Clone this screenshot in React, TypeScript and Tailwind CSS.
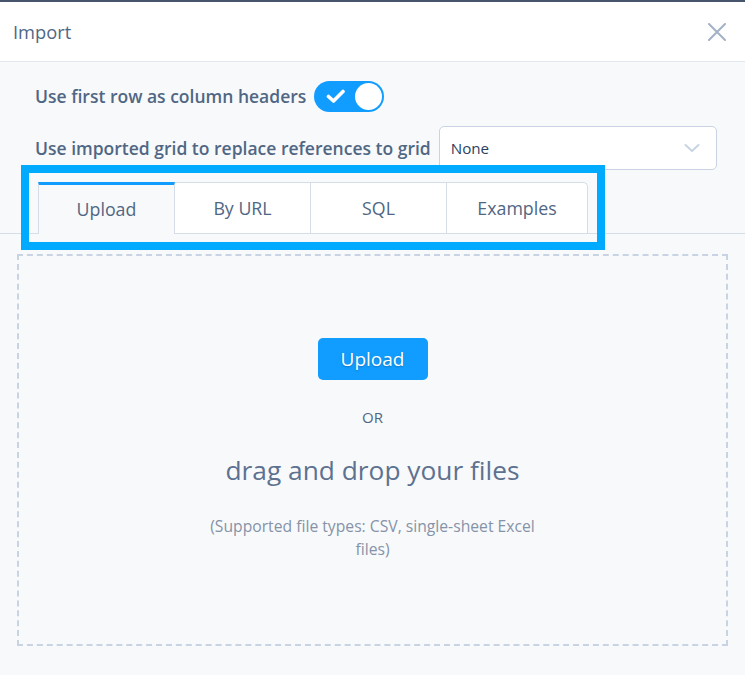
import React from "react";

const font = { fontFamily: '"Open Sans", "Noto Sans", sans-serif' };

function Tab({ label, active, last }: { label: string; active?: boolean; last?: boolean }) {
  if (active) {
    return (
      <div className="w-[137px] h-[52px] -mb-px flex items-center justify-center border-x border-[#d5dde8] border-t-[3px] border-t-[#119dff] bg-[#f8f9fb] text-[17.8px] text-[#506784]">
        {label}
      </div>
    );
  }
  return (
    <div
      className={
        "h-[51px] flex items-center justify-center border-t border-r border-[#d5dde8] bg-white text-[17.8px] text-[#506784] " +
        (last ? "w-[141px] rounded-tr-[5px]" : "w-[136px]")
      }
    >
      {label}
    </div>
  );
}

export default function App() {
  return (
    <div className="relative w-[745px] h-[675px] bg-[#f8f9fb] overflow-hidden" style={font}>
      <div className="h-[2px] bg-[#46556b]" />
      <div className="h-[60px] bg-white border-b border-[#e3e8ef] flex items-center justify-between pl-[13px] pr-[19px]">
        <span className="text-[18.3px] text-[#506784]">Import</span>
        <svg width="18" height="18" viewBox="0 0 18 18" className="mt-[1px]">
          <path d="M1 1 L17 17 M17 1 L1 17" stroke="#a2b1c6" strokeWidth="2" strokeLinecap="round" />
        </svg>
      </div>

      <div className="pl-[35px] pt-[18px]">
        <div className="flex items-center h-[32px] gap-[8px]">
          <span className="text-[17.5px] font-semibold text-[#506784]">Use first row as column headers</span>
          <div className="w-[70px] h-[31px] rounded-full bg-[#119dff] flex items-center justify-between pl-[12px] pr-[2px]">
            <svg width="20" height="16" viewBox="0 0 20 16">
              <path d="M2.5 8.5 L7.5 13 L17 3.5" stroke="white" strokeWidth="3.6" fill="none" strokeLinecap="round" strokeLinejoin="round" />
            </svg>
            <div className="w-[27px] h-[27px] rounded-full bg-white" />
          </div>
        </div>

        <div className="flex items-center mt-[14px] gap-[8px]">
          <span className="text-[17.5px] font-semibold text-[#506784]">Use imported grid to replace references to grid</span>
          <div className="w-[278px] h-[44px] bg-white border border-[#c8d4e3] rounded-[5px] flex items-center justify-between pl-[11px] pr-[16px]">
            <span className="text-[15.2px] text-[#2a3f5f]">None</span>
            <svg width="16" height="10" viewBox="0 0 16 10">
              <path d="M1.5 2 L8 8 L14.5 2" stroke="#c8d4e3" strokeWidth="2" fill="none" strokeLinecap="round" strokeLinejoin="round" />
            </svg>
          </div>
        </div>
      </div>

      <div className="mt-[12px] border-b border-[#d5dde8] pl-[38px] flex items-end">
        <Tab label="Upload" active />
        <Tab label="By URL" />
        <Tab label="SQL" />
        <Tab label="Examples" last />
      </div>

      <div className="mx-[17px] mt-[20px] h-[392px] border-2 border-dashed border-[#c8d4e3] flex flex-col items-center">
        <button className="mt-[82px] w-[110px] h-[42px] rounded-[5px] bg-[#119dff] text-white text-[19px]" style={{ textShadow: "0 1px 2px rgba(0,0,0,0.25)" }}>
          Upload
        </button>
        <div className="mt-[27px] text-[15px] leading-[20px] text-[#506784]">OR</div>
        <div className="mt-[27px] text-[26.3px] leading-[32px] text-[#5d7190]">drag and drop your files</div>
        <div className="mt-[29px] w-[350px] text-center text-[15.7px] leading-[23px] text-[#8593a8]">
          (Supported file types: CSV, single-sheet Excel files)
        </div>
      </div>

      <div className="absolute left-[21px] top-[165px] w-[584px] h-[85px] border-[8px] border-[#00aaff]" />
    </div>
  );
}
